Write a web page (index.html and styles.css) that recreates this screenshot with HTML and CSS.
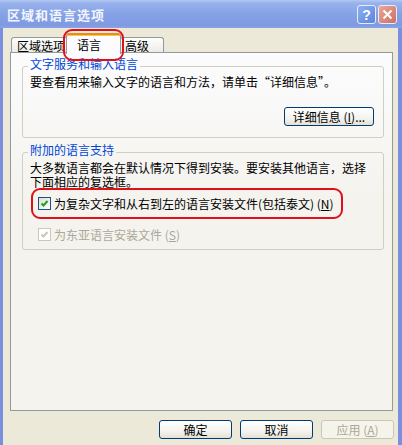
FILE: index.html
```html
<!DOCTYPE html>
<html lang="zh-CN">
<head>
    <meta charset="UTF-8">
    <title>区域和语言选项</title>
    <link rel="stylesheet" href="styles.css">
</head>
<body>
    <div class="window">
        <div class="titlebar">
            <span class="title">区域和语言选项</span>
            <span class="cap-btn help">?</span>
            <span class="cap-btn close">
                <svg width="11" height="11" viewBox="0 0 11 11"><path d="M1.5 1.5L9.5 9.5M9.5 1.5L1.5 9.5" stroke="#fff" stroke-width="2"/></svg>
            </span>
        </div>

        <div class="client">
            <div class="tabs">
                <div class="tab first">区域选项</div>
                <div class="tab active">语言<span class="mark mark-tab"></span></div>
                <div class="tab last">高级</div>
            </div>

            <div class="panel">
                <fieldset class="group g1">
                    <legend>文字服务和输入语言</legend>
                    <p class="desc">要查看用来输入文字的语言和方法，请单击“详细信息”。</p>
                    <div class="btn-row">
                        <button class="btn details">详细信息 (<u>I</u>)...</button>
                    </div>
                </fieldset>

                <fieldset class="group g2">
                    <legend>附加的语言支持</legend>
                    <p class="desc">大多数语言都会在默认情况下得到安装。要安装其他语言，选择<br>下面相应的复选框。</p>
                    <label class="check-row first-check">
                        <span class="box">
                            <svg width="11" height="11" viewBox="0 0 11 11"><path d="M2.5 5.5L4.5 7.5L8.5 3" fill="none" stroke="#21a121" stroke-width="2"/></svg>
                        </span>
                        <span>为复杂文字和从右到左的语言安装文件(包括泰文) (<u>N</u>)</span>
                        <span class="mark mark-row"></span>
                    </label>
                    <label class="check-row disabled">
                        <span class="box">
                            <svg width="11" height="11" viewBox="0 0 11 11"><path d="M2.5 5.5L4.5 7.5L8.5 3" fill="none" stroke="#cac8bb" stroke-width="2"/></svg>
                        </span>
                        <span>为东亚语言安装文件 (<u>S</u>)</span>
                    </label>
                </fieldset>
            </div>

            <div class="footer">
                <button class="btn">确定</button>
                <button class="btn">取消</button>
                <button class="btn" disabled>应用 (<u>A</u>)</button>
            </div>
        </div>
    </div>
</body>
</html>
```

FILE: styles.css
```css
body {
    margin: 0;
    font-family: "Noto Sans CJK SC", "Liberation Sans", sans-serif;
    font-size: 12px;
    color: #000;
}
.window {
    width: 402px;
    height: 445px;
    display: flex;
    flex-direction: column;
    overflow: hidden;
}
.titlebar {
    height: 28px;
    flex: none;
    display: flex;
    align-items: center;
    gap: 2px;
    padding: 0 5px 0 7px;
    background: linear-gradient(#b4c7f3 0, #98b2ec 3px, #86a2e6 50%, #7f9ae1 90%, #8aa4e4 100%);
}
.title {
    flex: 1;
    color: #f2f5fd;
    font-size: 13px;
    font-weight: bold;
    letter-spacing: 1px;
    line-height: 14px;
    padding-top: 1px;
}
.cap-btn {
    width: 19px;
    height: 19px;
    box-sizing: border-box;
    border: 1px solid #e6ecfa;
    border-radius: 3px;
    display: flex;
    align-items: center;
    justify-content: center;
    color: #fff;
    font-family: "Liberation Sans", sans-serif;
    font-weight: bold;
    font-size: 14px;
    margin-top: 1px;
}
.help {
    background: linear-gradient(135deg, #8fb0f0, #5b85dc);
}
.close {
    background: linear-gradient(135deg, #e9a89b, #cd6f62);
}
.client {
    flex: 1;
    background: #ece9d8;
    border-left: 3px solid #7b8fde;
    border-right: 4px solid #7b8fde;
    padding: 5px 5px 0 7px;
}
.tabs {
    height: 19px;
    display: flex;
    align-items: flex-end;
    padding-left: 1px;
}
.tab {
    height: 15px;
    box-sizing: border-box;
    border: 1px solid #919b9c;
    border-bottom: none;
    border-radius: 3px 3px 0 0;
    padding-top: 2px;
    line-height: 12px;
    background: linear-gradient(#fefefe, #ecebe6);
}
.tab.first {
    width: 57px;
    padding-left: 5px;
}
.tab.active {
    position: relative;
    z-index: 2;
    width: 55px;
    height: 21px;
    margin: 0 0 -2px -2px;
    padding: 4px 0 0 10px;
    border-top: 2px solid #e68b2c;
    box-shadow: inset 0 1px 0 #ffc73c;
    background: #fcfcfe;
}
.tab.last {
    width: 44px;
    margin-left: -1px;
    padding-left: 4px;
}
.panel {
    height: 359px;
    box-sizing: border-box;
    border: 1px solid #919b9c;
    background: linear-gradient(#fcfcfe, #f4f3ee 40%);
    padding-top: 5px;
}
.group {
    margin: 0 8px 0 11px;
    padding: 2px 9px 11px 7px;
    border: 1px solid #d0d0bf;
    border-radius: 3px;
    min-width: 0;
}
.group legend {
    padding: 0 2px 4px;
    margin-left: -2px;
    line-height: 12px;
    color: #0046d5;
}
.g2 {
    margin-top: 6px;
    padding-top: 1px;
    padding-bottom: 8px;
}
.desc {
    margin: 0;
    line-height: 12px;
}
.g2 .desc {
    line-height: 14px;
}
.btn-row {
    display: flex;
    justify-content: flex-end;
    margin-top: 19px;
}
.btn {
    height: 19px;
    width: 73px;
    padding: 0;
    border: 1px solid #003c74;
    border-radius: 3px;
    background: linear-gradient(#ffffff, #f4f3ee 60%, #e3e0d5);
    font-family: inherit;
    font-size: 12px;
    line-height: 15px;
    color: #000;
}
.btn.details {
    width: 90px;
}
.btn:disabled {
    border-color: #c9c7ba;
    background: #f5f4ea;
    color: #aca899;
}
.check-row {
    position: relative;
    display: flex;
    align-items: center;
    gap: 3px;
    height: 13px;
    margin-left: 8px;
    line-height: 13px;
}
.first-check {
    margin-top: 8px;
}
.check-row.disabled {
    margin-top: 18px;
    color: #aca899;
}
.box {
    width: 13px;
    height: 13px;
    box-sizing: border-box;
    border: 1px solid #1c5180;
    background: linear-gradient(135deg, #dcdcd7, #ffffff);
    display: flex;
    align-items: center;
    justify-content: center;
}
.disabled .box {
    border-color: #cac8bb;
    background: #fff;
}
.mark {
    position: absolute;
    box-sizing: border-box;
    border: 2px solid #e0101a;
    border-radius: 9px;
    pointer-events: none;
}
.mark-tab {
    left: -4px;
    top: -6px;
    width: 61px;
    height: 32px;
}
.mark-row {
    left: -7px;
    top: -9px;
    width: 312px;
    height: 31px;
}
.footer {
    display: flex;
    justify-content: flex-end;
    gap: 8px;
    margin: 9px -1px 0 0;
}
```
